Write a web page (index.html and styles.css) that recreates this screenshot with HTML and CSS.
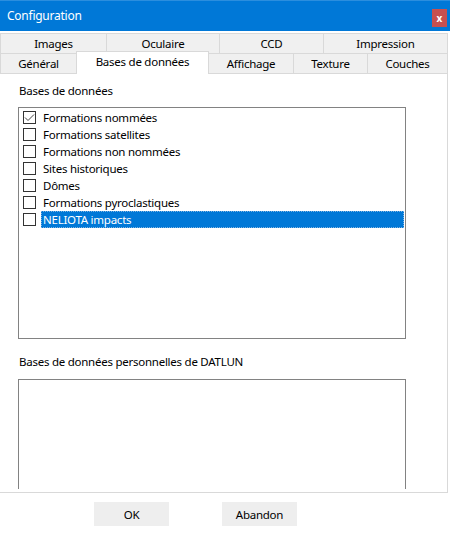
FILE: index.html
```html
<!DOCTYPE html>
<html lang="fr">
<head>
<meta charset="utf-8">
<title>Configuration</title>
<link rel="stylesheet" href="styles.css">
</head>
<body>
<div class="window">
  <div class="titlebar">
    <span class="title">Configuration</span>
    <span class="close">x</span>
  </div>
  <div class="tabs">
    <div class="tabrow">
      <div class="tab w106">Images</div>
      <div class="tab w113">Oculaire</div>
      <div class="tab w104">CCD</div>
      <div class="tab w124 last">Impression</div>
    </div>
    <div class="tabrow">
      <div class="tab w76">Général</div>
      <div class="tab w132 active">Bases de données</div>
      <div class="tab w85">Affichage</div>
      <div class="tab w74">Texture</div>
      <div class="tab w80 last">Couches</div>
    </div>
  </div>
  <div class="panel">
    <div class="label first">Bases de données</div>
    <div class="listbox main">
      <div class="item"><span class="cb checked"><svg width="11" height="11" viewBox="0 0 11 11"><path d="M1 5.5 L4 8.5 L10 2.5" fill="none" stroke="#444" stroke-width="1"/></svg></span><span class="txt">Formations nommées</span></div>
      <div class="item"><span class="cb"></span><span class="txt">Formations satellites</span></div>
      <div class="item"><span class="cb"></span><span class="txt">Formations non nommées</span></div>
      <div class="item"><span class="cb"></span><span class="txt">Sites historiques</span></div>
      <div class="item"><span class="cb"></span><span class="txt">Dômes</span></div>
      <div class="item"><span class="cb"></span><span class="txt">Formations pyroclastiques</span></div>
      <div class="item"><span class="cb"></span><span class="txt sel">NELIOTA impacts</span></div>
    </div>
    <div class="label second">Bases de données personnelles de DATLUN</div>
    <div class="listbox personal"></div>
  </div>
  <div class="buttons">
    <button class="btn">OK</button>
    <button class="btn">Abandon</button>
  </div>
</div>
</body>
</html>
```
FILE: styles.css
```css
* { box-sizing: border-box; }
html, body { margin: 0; padding: 0; background: #ffffff; }
body {
  font-family: "Noto Sans", "Open Sans", "DejaVu Sans", sans-serif;
  font-size: 11.5px;
  letter-spacing: -0.25px;
  color: #000;
  width: 450px;
  height: 534px;
  overflow: hidden;
}
.titlebar {
  height: 31px;
  background: #0078d7;
  border-top: 1px solid #2b8ede;
  display: flex;
  align-items: center;
  color: #fff;
}
.title { padding-left: 7px; font-size: 12px; line-height: 16px; }
.close {
  margin-left: auto;
  margin-right: 3px;
  width: 15px;
  height: 18px;
  background: #c75050;
  color: #fff;
  font-size: 10px;
  font-weight: bold;
  letter-spacing: 0;
  display: flex;
  align-items: center;
  justify-content: center;
  margin-top: 4px;
}
.tabs { padding-top: 2px; }
.tabrow { display: flex; height: 20px; }
.tab {
  height: 20px;
  background: #f0f0f0;
  border-top: 1px solid #d9d9d9;
  border-left: 1px solid #d9d9d9;
  display: flex;
  align-items: center;
  justify-content: center;
  line-height: 16px;
  white-space: nowrap;
}
.tab.last { border-right: 1px solid #d9d9d9; }
.tab.active {
  background: #fff;
  height: 23px;
  margin-top: -2px;
  position: relative;
  z-index: 1;
  border-right: 1px solid #d9d9d9;
  margin-right: -1px;
  padding-bottom: 2px;
}
.w106 { width: 106px; }
.w113 { width: 113px; }
.w104 { width: 104px; }
.w124 { width: 125px; }
.w76 { width: 76px; }
.w132 { width: 133px; }
.w85 { width: 85px; }
.w74 { width: 74px; }
.w80 { width: 81px; }
.panel {
  width: 448px;
  height: 420px;
  background: #fff;
  border: 1px solid #d9d9d9;
  border-left: none;
  padding: 9px 0 0 18px;
  overflow: hidden;
}
.label { line-height: 16px; height: 16px; padding-left: 1px; white-space: nowrap; }
.label.second { margin-top: 15px; }
.listbox {
  width: 388px;
  border: 1px solid #828282;
  background: #fff;
  margin-top: 8px;
}
.listbox.main { height: 232px; padding-top: 1px; }
.listbox.personal { height: 110px; border-bottom: none; margin-top: 9px; }
.item { display: flex; align-items: center; height: 17px; }
.cb {
  width: 13px;
  height: 13px;
  border: 1px solid #333;
  margin-left: 4px;
  flex: none;
  display: flex;
  align-items: center;
  justify-content: center;
}
.txt {
  margin-left: 5px;
  padding: 0 2px;
  line-height: 16px;
  white-space: nowrap;
}
.txt.sel {
  flex: 1;
  margin-right: 1px;
  height: 17px;
  line-height: 15px;
  background: #0078d7;
  color: #fff;
  border: 1px dotted #7fb4e2;
  padding-left: 1px;
}
.buttons {
  display: flex;
  gap: 53px;
  padding: 9px 0 0 94px;
}
.btn {
  width: 75px;
  height: 24px;
  background: #eeeeee;
  border: none;
  font-family: inherit;
  font-size: 11.5px;
  letter-spacing: -0.25px;
  color: #000;
  padding: 0;
}
```
